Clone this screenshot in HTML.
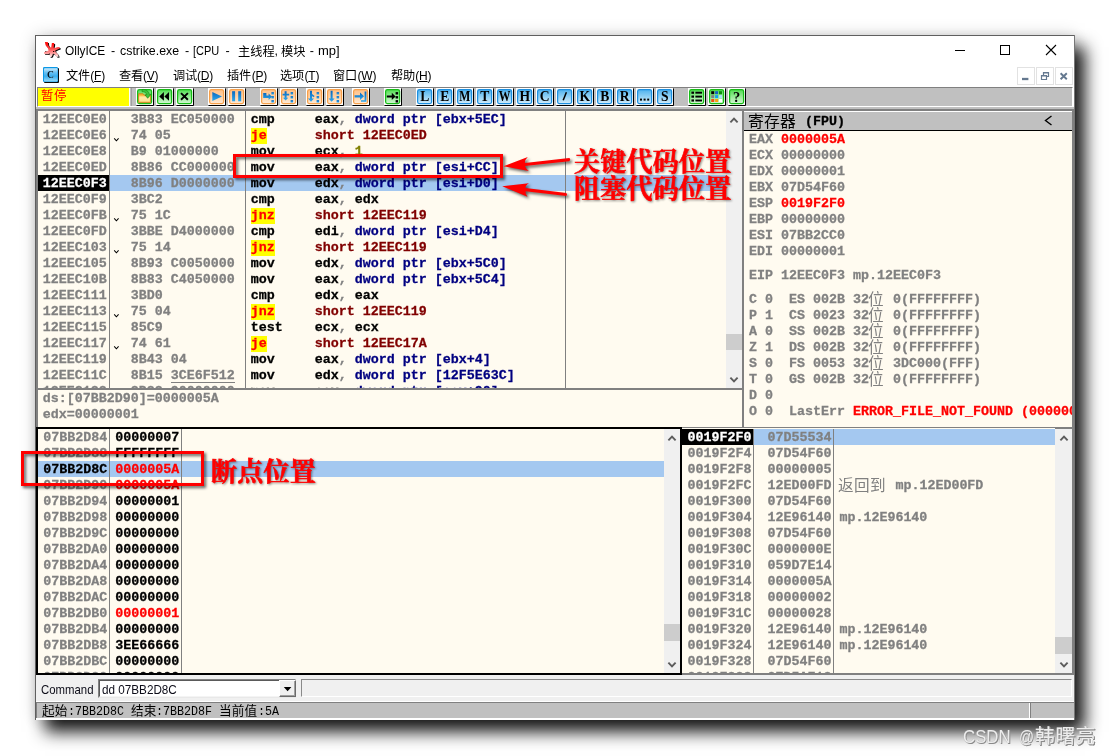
<!DOCTYPE html>
<html><head><meta charset="utf-8"><title>OllyICE</title>
<style>
html,body{margin:0;padding:0;background:#fff;}
body{width:1110px;height:756px;position:relative;overflow:hidden;font-family:"Liberation Sans",sans-serif;}
.a{position:absolute;}
#win{position:absolute;left:35px;top:35px;width:1040px;height:685px;background:#fff;
 box-shadow:10px 12px 16px rgba(0,0,0,.9),0 0 16px rgba(0,0,0,.16);}
.t{-webkit-text-stroke:.28px;white-space:pre;font-family:"Liberation Mono",monospace;font-weight:bold;font-size:13.333px;line-height:16px;height:16px;color:#000;}
.t span{display:inline-block;height:16px;vertical-align:top;}
.g{color:#808080}.r{color:#ff0000}.n{color:#000080}.m{color:#800000}.o{color:#808000}.w{color:#fff}
.j{color:#ff0000;background:#ffff00}
.ui{white-space:pre;font-family:"Liberation Sans",sans-serif;font-size:12px;line-height:16px;color:#000;}
.clip{overflow:hidden;}
.st{font-family:"Liberation Mono",monospace;font-size:13px;line-height:16px;white-space:pre;color:#000;transform-origin:0 0;transform:scaleX(.8974);}
#root{position:absolute;left:0;top:0;width:1110px;height:756px;will-change:transform;}
.cs{font-family:"Liberation Sans","Noto Sans CJK SC",sans-serif;}
.cm{font-family:"Liberation Mono","Noto Sans CJK SC",monospace;}
.cf{font-family:"Liberation Serif","Noto Serif CJK SC",serif;font-weight:bold;}
</style></head>
<body>
<svg width="0" height="0" style="position:absolute"><defs><linearGradient id="gG" x1="0" y1="0" x2="0" y2="1"><stop offset="0" stop-color="#52dc52"/><stop offset=".45" stop-color="#8eea8e"/><stop offset="1" stop-color="#d2f7d2"/></linearGradient>
<linearGradient id="gO" x1="0" y1="0" x2="0" y2="1"><stop offset="0" stop-color="#ffc088"/><stop offset=".5" stop-color="#ffd2a6"/><stop offset="1" stop-color="#ffead6"/></linearGradient>
<linearGradient id="gB" x1="0" y1="0" x2="0" y2="1"><stop offset="0" stop-color="#4fb2ee"/><stop offset=".5" stop-color="#8fd0f4"/><stop offset="1" stop-color="#d2ecfb"/></linearGradient>
<linearGradient id="gI" x1="0" y1="0" x2="0" y2="1"><stop offset="0" stop-color="#0868c0"/><stop offset="1" stop-color="#2ea8ec"/></linearGradient>
<linearGradient id="gS" x1="0" y1="0" x2="0" y2="1"><stop offset="0" stop-color="#ff0000"/><stop offset=".2" stop-color="#ff1818"/><stop offset=".5" stop-color="#ff5c5c"/><stop offset=".75" stop-color="#ffa0a0"/><stop offset="1" stop-color="#fff4f4"/></linearGradient>
<linearGradient id="gC" x1="0" y1="0" x2="0" y2="1"><stop offset="0" stop-color="#d0ecfb"/><stop offset=".3" stop-color="#6cc2f2"/><stop offset=".6" stop-color="#3aaeee"/><stop offset="1" stop-color="#9cdcf9"/></linearGradient>
<linearGradient id="gF" x1="0" y1="0" x2="0" y2="1"><stop offset="0" stop-color="#f0a020"/><stop offset=".5" stop-color="#ffe080"/><stop offset="1" stop-color="#f0b030"/></linearGradient>
<g id="splat">
 <path d="M.9 0L4 .2L4.3 3L5.5 5.2L7.2 5.6L7.9 1.1L10.2 1.1L10.2 3L9.6 5.4L11 6L13 5.2L15.6 5.1L15.8 6.6L13.5 7.4L11.2 8.6L11.6 10L14 12.4L14.8 14.6L12.8 15L11 12.8L9 11.6L8.4 13.6L7.2 15.2L5.6 14.8L5.8 12.4L5.4 11L4.6 12.2L.2 12L0 10.2L2.4 9.4L4.6 8.4L3.8 6L1.6 3.2Z" fill="#000" transform="translate(.9,.8)"/>
 <path d="M.9 0L4 .2L4.3 3L5.5 5.2L7.2 5.6L7.9 1.1L10.2 1.1L10.2 3L9.6 5.4L11 6L13 5.2L15.6 5.1L15.8 6.6L13.5 7.4L11.2 8.6L11.6 10L14 12.4L14.8 14.6L12.8 15L11 12.8L9 11.6L8.4 13.6L7.2 15.2L5.6 14.8L5.8 12.4L5.4 11L4.6 12.2L.2 12L0 10.2L2.4 9.4L4.6 8.4L3.8 6L1.6 3.2Z" fill="url(#gS)"/>
 <rect x="9" y="9" width="1.3" height="1" fill="#200"/><rect x="1.2" y="9.2" width="1.2" height=".8" fill="#300"/>
</g>
<g id="cicon">
 <rect x="1" y="1" width="15" height="15" rx="1" fill="#0a0a0a"/>
 <rect x="0" y="0" width="15" height="15" rx="1.2" fill="#0c98e6"/>
 <rect x="1" y="1.2" width="13.6" height="13.4" rx=".8" fill="url(#gC)"/>
 <text x="7.5" y="10.8" font-family="Liberation Serif" font-weight="bold" font-size="9.6" text-anchor="middle" fill="#04121e" stroke="#9adcfa" stroke-width=".25" paint-order="stroke">C</text>
</g>
</defs></svg>
<div id="root"><div id="win"></div>
<div class="a" style="left:35px;top:35px;width:1040px;height:1px;background:#5f5f5f;"></div>
<div class="a" style="left:35px;top:35px;width:1px;height:685px;background:#5f5f5f;"></div>
<div class="a" style="left:1074px;top:35px;width:1px;height:685px;background:#777;"></div>
<div class="a ui" style="left:64.6px;top:42.4px;font-size:12.5px;line-height:18px;transform-origin:0 0;transform:scaleX(0.95)">OllyICE</div>
<div class="a ui" style="left:111px;top:42.4px;font-size:12.5px;line-height:18px;transform-origin:0 0;transform:scaleX(1)">-</div>
<div class="a ui" style="left:119.6px;top:42.4px;font-size:12.5px;line-height:18px;transform-origin:0 0;transform:scaleX(0.99)">cstrike.exe</div>
<div class="a ui" style="left:185px;top:42.4px;font-size:12.5px;line-height:18px;transform-origin:0 0;transform:scaleX(1)">-</div>
<div class="a ui" style="left:193.4px;top:42.4px;font-size:12.5px;line-height:18px;transform-origin:0 0;transform:scaleX(0.88)">[CPU</div>
<div class="a ui" style="left:225.6px;top:42.4px;font-size:12.5px;line-height:18px;transform-origin:0 0;transform:scaleX(1)">-</div>
<svg class="a" style="left:238px;top:44.6px;" width="40.6" height="16.2" fill="#000" overflow="visible"><text class="cs" x="0 12.2 24.4" y="10.74" font-size="12.2">主线程</text></svg>
<div class="a ui" style="left:274.5px;top:42.4px;font-size:12.5px;line-height:18px;transform-origin:0 0;transform:scaleX(1)">,</div>
<svg class="a" style="left:281px;top:44.6px;" width="28.4" height="16.2" fill="#000" overflow="visible"><text class="cs" x="0 12.2" y="10.74" font-size="12.2">模块</text></svg>
<div class="a ui" style="left:309.8px;top:42.4px;font-size:12.5px;line-height:18px;transform-origin:0 0;transform:scaleX(1)">-</div>
<div class="a ui" style="left:317.6px;top:42.4px;font-size:12.5px;line-height:18px;transform-origin:0 0;transform:scaleX(1.04)">mp]</div>
<svg class="a" style="left:950px;top:40px" width="115" height="20" fill="none" stroke="#000" stroke-width="1"><path d="M5 10.5H15"/><rect x="50.5" y="5.5" width="9" height="9"/><path d="M96 5L106 15M106 5L96 15" stroke-width="1.1"/></svg>
<svg class="a" style="left:44px;top:42px" width="17" height="17" viewBox="0 0 17 17"><use href="#splat"/></svg>
<svg class="a" style="left:43px;top:67px" width="16" height="16" viewBox="0 0 16 16"><use href="#cicon"/></svg>
<svg class="a" style="left:66px;top:69.2px;" width="28" height="16.2" fill="#000" overflow="visible"><text class="cs" x="0 12" y="10.74" font-size="12.2">文件</text></svg>
<div class="a ui" style="left:90.3px;top:67px;font-size:12px;line-height:18px;letter-spacing:-.2px">(<u>F</u>)</div>
<svg class="a" style="left:118.6px;top:69.2px;" width="28" height="16.2" fill="#000" overflow="visible"><text class="cs" x="0 12" y="10.74" font-size="12.2">查看</text></svg>
<div class="a ui" style="left:142.9px;top:67px;font-size:12px;line-height:18px;letter-spacing:-.2px">(<u>V</u>)</div>
<svg class="a" style="left:172.6px;top:69.2px;" width="28" height="16.2" fill="#000" overflow="visible"><text class="cs" x="0 12" y="10.74" font-size="12.2">调试</text></svg>
<div class="a ui" style="left:196.9px;top:67px;font-size:12px;line-height:18px;letter-spacing:-.2px">(<u>D</u>)</div>
<svg class="a" style="left:227.4px;top:69.2px;" width="28" height="16.2" fill="#000" overflow="visible"><text class="cs" x="0 12" y="10.74" font-size="12.2">插件</text></svg>
<div class="a ui" style="left:251.7px;top:67px;font-size:12px;line-height:18px;letter-spacing:-.2px">(<u>P</u>)</div>
<svg class="a" style="left:280.2px;top:69.2px;" width="28" height="16.2" fill="#000" overflow="visible"><text class="cs" x="0 12" y="10.74" font-size="12.2">选项</text></svg>
<div class="a ui" style="left:304.5px;top:67px;font-size:12px;line-height:18px;letter-spacing:-.2px">(<u>T</u>)</div>
<svg class="a" style="left:333.2px;top:69.2px;" width="28" height="16.2" fill="#000" overflow="visible"><text class="cs" x="0 12" y="10.74" font-size="12.2">窗口</text></svg>
<div class="a ui" style="left:357.5px;top:67px;font-size:12px;line-height:18px;letter-spacing:-.2px">(<u>W</u>)</div>
<svg class="a" style="left:391px;top:69.2px;" width="28" height="16.2" fill="#000" overflow="visible"><text class="cs" x="0 12" y="10.74" font-size="12.2">帮助</text></svg>
<div class="a ui" style="left:415.3px;top:67px;font-size:12px;line-height:18px;letter-spacing:-.2px">(<u>H</u>)</div>
<div class="a" style="left:1017.3px;top:67px;width:17.4px;height:18px;background:#fff;border:1px solid #e2e2e2;box-sizing:border-box;"></div>
<div class="a" style="left:1036.3px;top:67px;width:17.4px;height:18px;background:#fff;border:1px solid #e2e2e2;box-sizing:border-box;"></div>
<div class="a" style="left:1055.3px;top:67px;width:17.4px;height:18px;background:#fff;border:1px solid #e2e2e2;box-sizing:border-box;"></div>
<svg class="a" style="left:1017px;top:67px" width="56" height="18" fill="none" stroke="#64788f"><path d="M5 12H11.4" stroke-width="2.3"/><path d="M24.5 8.5h5v4h-5zM26.5 8V5.5h5v4H30" stroke-width="1.2"/><path d="M24 8.8h6M26 5.8h6" stroke-width="1.6"/><path d="M43.6 6.2L49.8 12.2M49.8 6.2L43.6 12.2" stroke-width="1.9"/></svg>
<div class="a" style="left:37px;top:87px;width:1036px;height:20px;background:#c0c0c0;box-sizing:border-box;border-top:1px solid #808080;border-left:1px solid #808080;border-right:1px solid #fff;border-bottom:1px solid #fff;"></div>
<div class="a" style="left:38px;top:88px;width:91px;height:18px;background:#ffff00;"></div>
<div class="a" style="left:129px;top:88px;width:1px;height:18px;background:#fff;"></div>
<div class="a" style="left:130px;top:88px;width:1px;height:18px;background:#c0c0c0;"></div>
<div class="a" style="left:131px;top:88px;width:1px;height:18px;background:#a0a0a0;"></div>
<svg class="a" style="left:41.4px;top:89.4px;" width="30.2" height="16.4" fill="#ff0000" overflow="visible"><text class="cm" x="0 13.1" y="10.91" font-size="12.4">暂停</text></svg>
<div class="a" style="left:36px;top:107px;width:1038px;height:2px;background:#c0c0c0;"></div>
<div class="a" style="left:36px;top:109px;width:1038px;height:2px;background:#808080;"></div>
<div class="a" style="left:36px;top:675px;width:1038px;height:26px;background:#f0f0f0;"></div>
<div class="a ui" id="cmdl" style="left:41px;top:681px;font-size:13px;line-height:18px;transform-origin:0 0;transform:scaleX(.875);color:#0c0c18">Command</div>
<div class="a" style="left:98px;top:679px;width:198px;height:19px;background:#fff;box-sizing:border-box;border:1px solid;border-color:#828282 #e8e8e8 #e8e8e8 #828282;"></div>
<div class="a" style="left:99px;top:680px;width:196px;height:17px;background:transparent;box-sizing:border-box;border:1px solid;border-color:#5a5a5a #f4f4f4 #f4f4f4 #5a5a5a;"></div>
<div class="a ui" id="cmdt" style="left:102px;top:681px;font-size:13px;line-height:18px;transform-origin:0 0;transform:scaleX(.9);color:#0c0c18">dd 07BB2D8C</div>
<div class="a" style="left:279px;top:680px;width:16.5px;height:17px;background:#f0f0f0;box-sizing:border-box;border:1px solid;border-color:#fff #6a6a6a #6a6a6a #fff;box-shadow:inset -1px -1px 0 #a0a0a0;"></div>
<svg class="a" style="left:283px;top:686px" width="10" height="7"><path d="M.8 1h7.6L4.6 5.2z" fill="#000"/></svg>
<div class="a" style="left:301px;top:679px;width:771px;height:18px;background:#f0f0f0;box-sizing:border-box;border:1px solid;border-color:#8a8a8a #fff #fff #8a8a8a;"></div>
<div class="a" style="left:36px;top:701px;width:1038px;height:1px;background:#fff;"></div>
<div class="a" style="left:36px;top:702px;width:1038px;height:16px;background:#c0c0c0;box-sizing:border-box;border-top:1px solid #808080;border-left:1px solid #808080;"></div>
<div class="a" style="left:36px;top:718px;width:1038px;height:2px;background:#fff;"></div>
<div class="a" style="left:1029px;top:703px;width:1px;height:15px;background:#fff;"></div>
<div class="a" style="left:1030px;top:702px;width:1px;height:16px;background:#808080;"></div>
<svg class="a" style="left:42px;top:704.2px;" width="29.6" height="16.6" fill="#000" overflow="visible"><text class="cm" x="0 12.8" y="11.09" font-size="12.6">起始</text></svg>
<div class="a st" style="left:67.6px;top:704px;">:7BB2D8C </div>
<svg class="a" style="left:130.6px;top:704.2px;" width="29.6" height="16.6" fill="#000" overflow="visible"><text class="cm" x="0 12.8" y="11.09" font-size="12.6">结束</text></svg>
<div class="a st" style="left:156.2px;top:704px;">:7BB2D8F </div>
<svg class="a" style="left:219.2px;top:704.2px;" width="42.4" height="16.6" fill="#000" overflow="visible"><text class="cm" x="0 12.8 25.6" y="11.09" font-size="12.6">当前值</text></svg>
<div class="a st" style="left:257.6px;top:704px;">:5A</div>
<svg class="a" style="left:136px;top:88px" width="18" height="18" viewBox="0 0 18 18"><rect x="0" y="0" width="17" height="17" fill="#fff"/><path d="M17.5 0.5V17.5H0.5" fill="none" stroke="#000"/><rect x="1.6" y="1.6" width="14" height="14" rx="1.8" fill="url(#gG)" stroke="#16bc16" stroke-width="1.25"/><path d="M2.5 14.5V5.7h4.5l1 1.4h6.5v7.4z" fill="url(#gF)" stroke="#c88418" stroke-width=".8"/><rect x="3.4" y="8.4" width="10.4" height="5.2" fill="#ffeeb4" opacity=".75"/><path d="M6.2 1.5C9.6 1.1 12.7 3 13.4 6.4L15.1 6.2L11.7 10.3L9 6.9L10.8 6.7C10.2 4.6 8.6 3.6 6 3.6Z" fill="#3cc43c" stroke="#0c7c0c" stroke-width=".55"/></svg>
<svg class="a" style="left:156px;top:88px" width="18" height="18" viewBox="0 0 18 18"><rect x="0" y="0" width="17" height="17" fill="#fff"/><path d="M17.5 0.5V17.5H0.5" fill="none" stroke="#000"/><rect x="1.6" y="1.6" width="14" height="14" rx="1.8" fill="url(#gG)" stroke="#16bc16" stroke-width="1.25"/><path d="M3.2 8.4L7.9 4.1V12.8ZM8.4 8.4L13 4.1V12.8Z" fill="#000"/></svg>
<svg class="a" style="left:176px;top:88px" width="18" height="18" viewBox="0 0 18 18"><rect x="0" y="0" width="17" height="17" fill="#fff"/><path d="M17.5 0.5V17.5H0.5" fill="none" stroke="#000"/><rect x="1.6" y="1.6" width="14" height="14" rx="1.8" fill="url(#gG)" stroke="#16bc16" stroke-width="1.25"/><path d="M5 5.1L11.9 11.8M11.9 5.1L5 11.8" stroke="#000" stroke-width="1.9" fill="none"/></svg>
<svg class="a" style="left:208px;top:88px" width="18" height="18" viewBox="0 0 18 18"><rect x="0" y="0" width="17" height="17" fill="#fff"/><path d="M17.5 0.5V17.5H0.5" fill="none" stroke="#000"/><rect x="1.6" y="1.6" width="14" height="14" rx="1.8" fill="url(#gO)" stroke="#f7a04a" stroke-width="1.25"/><path d="M4.3 3.9L14 8.4L4.3 12.9Z" fill="url(#gI)"/></svg>
<svg class="a" style="left:228px;top:88px" width="18" height="18" viewBox="0 0 18 18"><rect x="0" y="0" width="17" height="17" fill="#fff"/><path d="M17.5 0.5V17.5H0.5" fill="none" stroke="#000"/><rect x="1.6" y="1.6" width="14" height="14" rx="1.8" fill="url(#gO)" stroke="#f7a04a" stroke-width="1.25"/><rect x="4.1" y="3.2" width="3" height="10.1" fill="url(#gI)"/><rect x="10.2" y="3.2" width="3" height="10.1" fill="url(#gI)"/></svg>
<svg class="a" style="left:260px;top:88px" width="18" height="18" viewBox="0 0 18 18"><rect x="0" y="0" width="17" height="17" fill="#fff"/><path d="M17.5 0.5V17.5H0.5" fill="none" stroke="#000"/><rect x="1.6" y="1.6" width="14" height="14" rx="1.8" fill="url(#gO)" stroke="#f7a04a" stroke-width="1.25"/><path d="M3.2 5h3.2v2.6h2.2V5.6L12 8.8 8.6 12v-2H3.2z" fill="url(#gI)"/><rect x="11.4" y="4.1" width="2.5" height="2.4" fill="url(#gI)"/><rect x="11.4" y="8.1" width="2.5" height="2.4" fill="url(#gI)"/><rect x="11.4" y="12.1" width="2.5" height="2.4" fill="url(#gI)"/></svg>
<svg class="a" style="left:280px;top:88px" width="18" height="18" viewBox="0 0 18 18"><rect x="0" y="0" width="17" height="17" fill="#fff"/><path d="M17.5 0.5V17.5H0.5" fill="none" stroke="#000"/><rect x="1.6" y="1.6" width="14" height="14" rx="1.8" fill="url(#gO)" stroke="#f7a04a" stroke-width="1.25"/><path d="M4.6 3.2h2v2.6h2.6v1.8H6.6v2.2h1.6L5.6 12.4 3 9.8h1.6V7.6H2.6V5.8h2z" fill="url(#gI)"/><rect x="10.6" y="4.1" width="2.5" height="2.4" fill="url(#gI)"/><rect x="10.6" y="8.1" width="2.5" height="2.4" fill="url(#gI)"/><rect x="10.6" y="12.1" width="2.5" height="2.4" fill="url(#gI)"/></svg>
<svg class="a" style="left:306px;top:88px" width="18" height="18" viewBox="0 0 18 18"><rect x="0" y="0" width="17" height="17" fill="#fff"/><path d="M17.5 0.5V17.5H0.5" fill="none" stroke="#000"/><rect x="1.6" y="1.6" width="14" height="14" rx="1.8" fill="url(#gO)" stroke="#f7a04a" stroke-width="1.25"/><path d="M4 2.8h2v3.2l2.6 2-1 1.2-1.6-1.2v2.4h2L5 13.8 2 10.4h2z" fill="url(#gI)"/><rect x="10.6" y="4.1" width="2.5" height="2.4" fill="url(#gI)"/><rect x="10.6" y="8.1" width="2.5" height="2.4" fill="url(#gI)"/><rect x="10.6" y="12.1" width="2.5" height="2.4" fill="url(#gI)"/></svg>
<svg class="a" style="left:326px;top:88px" width="18" height="18" viewBox="0 0 18 18"><rect x="0" y="0" width="17" height="17" fill="#fff"/><path d="M17.5 0.5V17.5H0.5" fill="none" stroke="#000"/><rect x="1.6" y="1.6" width="14" height="14" rx="1.8" fill="url(#gO)" stroke="#f7a04a" stroke-width="1.25"/><path d="M4.6 2.8h2v7.6h2L5.6 13.8 2.6 10.4h2z" fill="url(#gI)"/><rect x="10.6" y="4.1" width="2.5" height="2.4" fill="url(#gI)"/><rect x="10.6" y="8.1" width="2.5" height="2.4" fill="url(#gI)"/><rect x="10.6" y="12.1" width="2.5" height="2.4" fill="url(#gI)"/></svg>
<svg class="a" style="left:352px;top:88px" width="18" height="18" viewBox="0 0 18 18"><rect x="0" y="0" width="17" height="17" fill="#fff"/><path d="M17.5 0.5V17.5H0.5" fill="none" stroke="#000"/><rect x="1.6" y="1.6" width="14" height="14" rx="1.8" fill="url(#gO)" stroke="#f7a04a" stroke-width="1.25"/><path d="M2.6 7.2h5.4V4.6L12 8.3 8 12V9.4H2.6z" fill="url(#gI)"/><path d="M12.6 3.4h1.8v10.4H9v-1.6h3.6z" fill="url(#gI)"/></svg>
<svg class="a" style="left:384px;top:88px" width="18" height="18" viewBox="0 0 18 18"><rect x="0" y="0" width="17" height="17" fill="#fff"/><path d="M17.5 0.5V17.5H0.5" fill="none" stroke="#000"/><rect x="1.6" y="1.6" width="14" height="14" rx="1.8" fill="url(#gG)" stroke="#16bc16" stroke-width="1.25"/><path d="M2.8 7.4h5V4.8L11.6 8.4 7.8 12V9.4h-5z" fill="#000"/><rect x="11.6" y="4.1" width="2.5" height="2.4" fill="#000"/><rect x="11.6" y="8.1" width="2.5" height="2.4" fill="#000"/><rect x="11.6" y="12.1" width="2.5" height="2.4" fill="#000"/></svg>
<svg class="a" style="left:416px;top:88px" width="18" height="18" viewBox="0 0 18 18"><rect x="0" y="0" width="17" height="17" fill="#fff"/><path d="M17.5 0.5V17.5H0.5" fill="none" stroke="#000"/><rect x="1.6" y="1.6" width="14" height="14" rx="1.8" fill="url(#gB)" stroke="#1c8fe0" stroke-width="1.25"/><text x="8.7" y="13.4" font-family="Liberation Serif" font-weight="bold" font-size="13.6" text-anchor="middle" fill="#000">L</text></svg>
<svg class="a" style="left:436px;top:88px" width="18" height="18" viewBox="0 0 18 18"><rect x="0" y="0" width="17" height="17" fill="#fff"/><path d="M17.5 0.5V17.5H0.5" fill="none" stroke="#000"/><rect x="1.6" y="1.6" width="14" height="14" rx="1.8" fill="url(#gB)" stroke="#1c8fe0" stroke-width="1.25"/><text x="8.7" y="13.4" font-family="Liberation Serif" font-weight="bold" font-size="13.6" text-anchor="middle" fill="#000">E</text></svg>
<svg class="a" style="left:456px;top:88px" width="18" height="18" viewBox="0 0 18 18"><rect x="0" y="0" width="17" height="17" fill="#fff"/><path d="M17.5 0.5V17.5H0.5" fill="none" stroke="#000"/><rect x="1.6" y="1.6" width="14" height="14" rx="1.8" fill="url(#gB)" stroke="#1c8fe0" stroke-width="1.25"/><text x="8.7" y="13.4" transform="translate(8.7,0) scale(0.86,1) translate(-8.7,0)" font-family="Liberation Serif" font-weight="bold" font-size="13.6" text-anchor="middle" fill="#000">M</text></svg>
<svg class="a" style="left:476px;top:88px" width="18" height="18" viewBox="0 0 18 18"><rect x="0" y="0" width="17" height="17" fill="#fff"/><path d="M17.5 0.5V17.5H0.5" fill="none" stroke="#000"/><rect x="1.6" y="1.6" width="14" height="14" rx="1.8" fill="url(#gB)" stroke="#1c8fe0" stroke-width="1.25"/><text x="8.7" y="13.4" font-family="Liberation Serif" font-weight="bold" font-size="13.6" text-anchor="middle" fill="#000">T</text></svg>
<svg class="a" style="left:496px;top:88px" width="18" height="18" viewBox="0 0 18 18"><rect x="0" y="0" width="17" height="17" fill="#fff"/><path d="M17.5 0.5V17.5H0.5" fill="none" stroke="#000"/><rect x="1.6" y="1.6" width="14" height="14" rx="1.8" fill="url(#gB)" stroke="#1c8fe0" stroke-width="1.25"/><text x="8.7" y="13.4" transform="translate(8.7,0) scale(0.86,1) translate(-8.7,0)" font-family="Liberation Serif" font-weight="bold" font-size="13.6" text-anchor="middle" fill="#000">W</text></svg>
<svg class="a" style="left:516px;top:88px" width="18" height="18" viewBox="0 0 18 18"><rect x="0" y="0" width="17" height="17" fill="#fff"/><path d="M17.5 0.5V17.5H0.5" fill="none" stroke="#000"/><rect x="1.6" y="1.6" width="14" height="14" rx="1.8" fill="url(#gB)" stroke="#1c8fe0" stroke-width="1.25"/><text x="8.7" y="13.4" font-family="Liberation Serif" font-weight="bold" font-size="13.6" text-anchor="middle" fill="#000">H</text></svg>
<svg class="a" style="left:536px;top:88px" width="18" height="18" viewBox="0 0 18 18"><rect x="0" y="0" width="17" height="17" fill="#fff"/><path d="M17.5 0.5V17.5H0.5" fill="none" stroke="#000"/><rect x="1.6" y="1.6" width="14" height="14" rx="1.8" fill="url(#gB)" stroke="#1c8fe0" stroke-width="1.25"/><text x="8.7" y="13.4" font-family="Liberation Serif" font-weight="bold" font-size="13.6" text-anchor="middle" fill="#000">C</text></svg>
<svg class="a" style="left:556px;top:88px" width="18" height="18" viewBox="0 0 18 18"><rect x="0" y="0" width="17" height="17" fill="#fff"/><path d="M17.5 0.5V17.5H0.5" fill="none" stroke="#000"/><rect x="1.6" y="1.6" width="14" height="14" rx="1.8" fill="url(#gB)" stroke="#1c8fe0" stroke-width="1.25"/><path d="M7.2 12.2L10.4 4.2" stroke="#000" stroke-width="1.5"/></svg>
<svg class="a" style="left:576px;top:88px" width="18" height="18" viewBox="0 0 18 18"><rect x="0" y="0" width="17" height="17" fill="#fff"/><path d="M17.5 0.5V17.5H0.5" fill="none" stroke="#000"/><rect x="1.6" y="1.6" width="14" height="14" rx="1.8" fill="url(#gB)" stroke="#1c8fe0" stroke-width="1.25"/><text x="8.7" y="13.4" font-family="Liberation Serif" font-weight="bold" font-size="13.6" text-anchor="middle" fill="#000">K</text></svg>
<svg class="a" style="left:596px;top:88px" width="18" height="18" viewBox="0 0 18 18"><rect x="0" y="0" width="17" height="17" fill="#fff"/><path d="M17.5 0.5V17.5H0.5" fill="none" stroke="#000"/><rect x="1.6" y="1.6" width="14" height="14" rx="1.8" fill="url(#gB)" stroke="#1c8fe0" stroke-width="1.25"/><text x="8.7" y="13.4" font-family="Liberation Serif" font-weight="bold" font-size="13.6" text-anchor="middle" fill="#000">B</text></svg>
<svg class="a" style="left:616px;top:88px" width="18" height="18" viewBox="0 0 18 18"><rect x="0" y="0" width="17" height="17" fill="#fff"/><path d="M17.5 0.5V17.5H0.5" fill="none" stroke="#000"/><rect x="1.6" y="1.6" width="14" height="14" rx="1.8" fill="url(#gB)" stroke="#1c8fe0" stroke-width="1.25"/><text x="8.7" y="13.4" font-family="Liberation Serif" font-weight="bold" font-size="13.6" text-anchor="middle" fill="#000">R</text></svg>
<svg class="a" style="left:636px;top:88px" width="18" height="18" viewBox="0 0 18 18"><rect x="0" y="0" width="17" height="17" fill="#fff"/><path d="M17.5 0.5V17.5H0.5" fill="none" stroke="#000"/><rect x="1.6" y="1.6" width="14" height="14" rx="1.8" fill="url(#gB)" stroke="#1c8fe0" stroke-width="1.25"/><rect x="4" y="10.6" width="2" height="2" fill="#000"/><rect x="7.6" y="10.6" width="2" height="2" fill="#000"/><rect x="11.2" y="10.6" width="2" height="2" fill="#000"/></svg>
<svg class="a" style="left:656px;top:88px" width="18" height="18" viewBox="0 0 18 18"><rect x="0" y="0" width="17" height="17" fill="#fff"/><path d="M17.5 0.5V17.5H0.5" fill="none" stroke="#000"/><rect x="1.6" y="1.6" width="14" height="14" rx="1.8" fill="url(#gB)" stroke="#1c8fe0" stroke-width="1.25"/><text x="8.7" y="13.4" font-family="Liberation Serif" font-weight="bold" font-size="13.6" text-anchor="middle" fill="#000">S</text></svg>
<svg class="a" style="left:688px;top:88px" width="18" height="18" viewBox="0 0 18 18"><rect x="0" y="0" width="17" height="17" fill="#fff"/><path d="M17.5 0.5V17.5H0.5" fill="none" stroke="#000"/><rect x="1.6" y="1.6" width="14" height="14" rx="1.8" fill="url(#gG)" stroke="#16bc16" stroke-width="1.25"/><rect x="3.4" y="3.6" width="2.6" height="2.2" fill="#000"/><rect x="7.4" y="3.75" width="6.6" height="1.9" fill="#000"/><rect x="3.4" y="7.5" width="2.6" height="2.2" fill="#000"/><rect x="7.4" y="7.65" width="6.6" height="1.9" fill="#000"/><rect x="3.4" y="11.4" width="2.6" height="2.2" fill="#000"/><rect x="7.4" y="11.55" width="6.6" height="1.9" fill="#000"/></svg>
<svg class="a" style="left:708px;top:88px" width="18" height="18" viewBox="0 0 18 18"><rect x="0" y="0" width="17" height="17" fill="#fff"/><path d="M17.5 0.5V17.5H0.5" fill="none" stroke="#000"/><rect x="1.6" y="1.6" width="14" height="14" rx="1.8" fill="url(#gG)" stroke="#16bc16" stroke-width="1.25"/><rect x="3.2" y="3.2" width="3" height="3" fill="#000"/><rect x="7.1" y="3.2" width="3" height="3" fill="#1560c0"/><rect x="11" y="3.2" width="3" height="3" fill="#0e8e0e"/><rect x="3.2" y="7.1" width="3" height="3" fill="#808080"/><rect x="7.1" y="7.1" width="3" height="3" fill="#10a0f0"/><rect x="11" y="7.1" width="3" height="3" fill="#a8e2f8"/><rect x="3.2" y="11" width="3" height="3" fill="#f05010"/><rect x="7.1" y="11" width="3" height="3" fill="#f8a010"/><rect x="11" y="11" width="3" height="3" fill="#fff"/></svg>
<svg class="a" style="left:728px;top:88px" width="18" height="18" viewBox="0 0 18 18"><rect x="0" y="0" width="17" height="17" fill="#fff"/><path d="M17.5 0.5V17.5H0.5" fill="none" stroke="#000"/><rect x="1.6" y="1.6" width="14" height="14" rx="1.8" fill="url(#gG)" stroke="#16bc16" stroke-width="1.25"/><text x="8.7" y="13.6" font-family="Liberation Serif" font-weight="bold" font-size="14.5" text-anchor="middle" fill="#000">?</text></svg>
<div class="a" style="left:36px;top:109px;width:2px;height:280px;background:#808080;"></div>
<div class="a" style="left:38px;top:111px;width:688px;height:277px;background:#fffbf0;"></div>
<div class="a clip" style="left:38px;top:111px;width:688px;height:277px">
<div class="a t g" style="left:4.7px;top:0.6px;">12EEC0E0</div>
<div class="a t g" style="left:92.7px;top:0.6px;">3B83 EC050000</div>
<div class="a t " style="left:212.7px;top:0.6px;">cmp     eax<span class="g">,</span><span class="n"> dword ptr [ebx+5EC]</span></div>
<div class="a t g" style="left:4.7px;top:16.6px;">12EEC0E6</div>
<svg class="a" style="left:75px;top:26px" width="8" height="6" fill="none" stroke="#000" stroke-width="1.05"><path d="M1.2 1.4L3.4 3.8L5.6 1.4"/></svg>
<div class="a t g" style="left:92.7px;top:16.6px;">74 05</div>
<div class="a t " style="left:212.7px;top:16.6px;"><span class="j">je</span>      <span class="m">short 12EEC0ED</span></div>
<div class="a t g" style="left:4.7px;top:32.6px;">12EEC0E8</div>
<div class="a t g" style="left:92.7px;top:32.6px;">B9 01000000</div>
<div class="a t " style="left:212.7px;top:32.6px;">mov     ecx<span class="g">,</span><span class="o"> 1</span></div>
<div class="a t g" style="left:4.7px;top:48.6px;">12EEC0ED</div>
<div class="a t g" style="left:92.7px;top:48.6px;">8B86 CC000000</div>
<div class="a t " style="left:212.7px;top:48.6px;">mov     eax<span class="g">,</span><span class="n"> dword ptr [esi+CC]</span></div>
<div class="a" style="left:0px;top:64px;width:71px;height:16px;background:#000;"></div>
<div class="a" style="left:72px;top:64px;width:616px;height:16px;background:#a4c8f0;"></div>
<div class="a t w" style="left:4.7px;top:64.6px;">12EEC0F3</div>
<div class="a t g" style="left:92.7px;top:64.6px;">8B96 D0000000</div>
<div class="a t " style="left:212.7px;top:64.6px;">mov     edx<span class="g">,</span><span class="n"> dword ptr [esi+D0]</span></div>
<div class="a t g" style="left:4.7px;top:80.6px;">12EEC0F9</div>
<div class="a t g" style="left:92.7px;top:80.6px;">3BC2</div>
<div class="a t " style="left:212.7px;top:80.6px;">cmp     eax<span class="g">,</span> edx</div>
<div class="a t g" style="left:4.7px;top:96.6px;">12EEC0FB</div>
<svg class="a" style="left:75px;top:106px" width="8" height="6" fill="none" stroke="#000" stroke-width="1.05"><path d="M1.2 1.4L3.4 3.8L5.6 1.4"/></svg>
<div class="a t g" style="left:92.7px;top:96.6px;">75 1C</div>
<div class="a t " style="left:212.7px;top:96.6px;"><span class="j">jnz</span>     <span class="m">short 12EEC119</span></div>
<div class="a t g" style="left:4.7px;top:112.6px;">12EEC0FD</div>
<div class="a t g" style="left:92.7px;top:112.6px;">3BBE D4000000</div>
<div class="a t " style="left:212.7px;top:112.6px;">cmp     edi<span class="g">,</span><span class="n"> dword ptr [esi+D4]</span></div>
<div class="a t g" style="left:4.7px;top:128.6px;">12EEC103</div>
<svg class="a" style="left:75px;top:138px" width="8" height="6" fill="none" stroke="#000" stroke-width="1.05"><path d="M1.2 1.4L3.4 3.8L5.6 1.4"/></svg>
<div class="a t g" style="left:92.7px;top:128.6px;">75 14</div>
<div class="a t " style="left:212.7px;top:128.6px;"><span class="j">jnz</span>     <span class="m">short 12EEC119</span></div>
<div class="a t g" style="left:4.7px;top:144.6px;">12EEC105</div>
<div class="a t g" style="left:92.7px;top:144.6px;">8B93 C0050000</div>
<div class="a t " style="left:212.7px;top:144.6px;">mov     edx<span class="g">,</span><span class="n"> dword ptr [ebx+5C0]</span></div>
<div class="a t g" style="left:4.7px;top:160.6px;">12EEC10B</div>
<div class="a t g" style="left:92.7px;top:160.6px;">8B83 C4050000</div>
<div class="a t " style="left:212.7px;top:160.6px;">mov     eax<span class="g">,</span><span class="n"> dword ptr [ebx+5C4]</span></div>
<div class="a t g" style="left:4.7px;top:176.6px;">12EEC111</div>
<div class="a t g" style="left:92.7px;top:176.6px;">3BD0</div>
<div class="a t " style="left:212.7px;top:176.6px;">cmp     edx<span class="g">,</span> eax</div>
<div class="a t g" style="left:4.7px;top:192.6px;">12EEC113</div>
<svg class="a" style="left:75px;top:202px" width="8" height="6" fill="none" stroke="#000" stroke-width="1.05"><path d="M1.2 1.4L3.4 3.8L5.6 1.4"/></svg>
<div class="a t g" style="left:92.7px;top:192.6px;">75 04</div>
<div class="a t " style="left:212.7px;top:192.6px;"><span class="j">jnz</span>     <span class="m">short 12EEC119</span></div>
<div class="a t g" style="left:4.7px;top:208.6px;">12EEC115</div>
<div class="a t g" style="left:92.7px;top:208.6px;">85C9</div>
<div class="a t " style="left:212.7px;top:208.6px;">test    ecx<span class="g">,</span> ecx</div>
<div class="a t g" style="left:4.7px;top:224.6px;">12EEC117</div>
<svg class="a" style="left:75px;top:234px" width="8" height="6" fill="none" stroke="#000" stroke-width="1.05"><path d="M1.2 1.4L3.4 3.8L5.6 1.4"/></svg>
<div class="a t g" style="left:92.7px;top:224.6px;">74 61</div>
<div class="a t " style="left:212.7px;top:224.6px;"><span class="j">je</span>      <span class="m">short 12EEC17A</span></div>
<div class="a t g" style="left:4.7px;top:240.6px;">12EEC119</div>
<div class="a t g" style="left:92.7px;top:240.6px;">8B43 04</div>
<div class="a t " style="left:212.7px;top:240.6px;">mov     eax<span class="g">,</span><span class="n"> dword ptr [ebx+4]</span></div>
<div class="a t g" style="left:4.7px;top:256.6px;">12EEC11C</div>
<div class="a t g" style="left:92.7px;top:256.6px;">8B15 3CE6F512</div>
<div class="a t " style="left:212.7px;top:256.6px;">mov     edx<span class="g">,</span><span class="n"> dword ptr [12F5E63C]</span></div>
<div class="a t g" style="left:4.7px;top:272.6px;">12EEC122</div>
<div class="a t g" style="left:92.7px;top:272.6px;">8B88 90000000</div>
<div class="a t " style="left:212.7px;top:272.6px;">mov     ecx<span class="g">,</span><span class="n"> dword ptr [eax+90]</span></div>
<div class="a" style="left:133px;top:271px;width:64px;height:1px;background:#808080;"></div>
</div>
<div class="a" style="left:109px;top:111px;width:1px;height:277px;background:#808080;"></div>
<div class="a" style="left:245px;top:111px;width:1px;height:277px;background:#808080;"></div>
<div class="a" style="left:565px;top:111px;width:1px;height:277px;background:#808080;"></div>
<div class="a" style="left:726px;top:111px;width:16px;height:277px;background:#f0f0f0;"></div>
<div class="a" style="left:726px;top:334px;width:16px;height:16px;background:#cdcdcd;"></div>
<svg class="a" style="left:728px;top:115.6px" width="12" height="8" fill="none" stroke="#5c5c5c" stroke-width="1.9"><path d="M2.4 6.4L6 2.6L9.6 6.4"/></svg>
<svg class="a" style="left:728px;top:376px" width="12" height="8" fill="none" stroke="#5c5c5c" stroke-width="1.9"><path d="M2.4 1.6L6 5.4L9.6 1.6"/></svg>
<div class="a" style="left:36px;top:388px;width:706px;height:2px;background:#808080;"></div>
<div class="a" style="left:36px;top:389px;width:2px;height:38px;background:#808080;"></div>
<div class="a" style="left:38px;top:390px;width:704px;height:37px;background:#fffbf0;"></div>
<div class="a t g" style="left:42.7px;top:390.6px;">ds:[07BB2D90]=0000005A</div>
<div class="a t g" style="left:42.7px;top:406.6px;">edx=00000001</div>
<div class="a" style="left:36px;top:427px;width:645px;height:2px;background:#000;"></div>
<div class="a" style="left:36px;top:427px;width:2px;height:248px;background:#000;"></div>
<div class="a" style="left:38px;top:429px;width:626px;height:244px;background:#fffbf0;"></div>
<div class="a clip" style="left:38px;top:429px;width:626px;height:244px">
<div class="a t g" style="left:5.2px;top:0.6px;">07BB2D84</div>
<div class="a t " style="left:77.2px;top:0.6px;">00000007</div>
<div class="a t g" style="left:5.2px;top:16.6px;">07BB2D88</div>
<div class="a t " style="left:77.2px;top:16.6px;">FFFFFFFF</div>
<div class="a" style="left:0px;top:32px;width:626px;height:16px;background:#a4c8f0;"></div>
<div class="a t " style="left:5.2px;top:32.6px;">07BB2D8C</div>
<div class="a t r" style="left:77.2px;top:32.6px;">0000005A</div>
<div class="a t g" style="left:5.2px;top:48.6px;">07BB2D90</div>
<div class="a t r" style="left:77.2px;top:48.6px;">0000005A</div>
<div class="a t g" style="left:5.2px;top:64.6px;">07BB2D94</div>
<div class="a t " style="left:77.2px;top:64.6px;">00000001</div>
<div class="a t g" style="left:5.2px;top:80.6px;">07BB2D98</div>
<div class="a t " style="left:77.2px;top:80.6px;">00000000</div>
<div class="a t g" style="left:5.2px;top:96.6px;">07BB2D9C</div>
<div class="a t " style="left:77.2px;top:96.6px;">00000000</div>
<div class="a t g" style="left:5.2px;top:112.6px;">07BB2DA0</div>
<div class="a t " style="left:77.2px;top:112.6px;">00000000</div>
<div class="a t g" style="left:5.2px;top:128.6px;">07BB2DA4</div>
<div class="a t " style="left:77.2px;top:128.6px;">00000000</div>
<div class="a t g" style="left:5.2px;top:144.6px;">07BB2DA8</div>
<div class="a t " style="left:77.2px;top:144.6px;">00000000</div>
<div class="a t g" style="left:5.2px;top:160.6px;">07BB2DAC</div>
<div class="a t " style="left:77.2px;top:160.6px;">00000000</div>
<div class="a t g" style="left:5.2px;top:176.6px;">07BB2DB0</div>
<div class="a t r" style="left:77.2px;top:176.6px;">00000001</div>
<div class="a t g" style="left:5.2px;top:192.6px;">07BB2DB4</div>
<div class="a t " style="left:77.2px;top:192.6px;">00000000</div>
<div class="a t g" style="left:5.2px;top:208.6px;">07BB2DB8</div>
<div class="a t " style="left:77.2px;top:208.6px;">3EE66666</div>
<div class="a t g" style="left:5.2px;top:224.6px;">07BB2DBC</div>
<div class="a t " style="left:77.2px;top:224.6px;">00000000</div>
<div class="a t g" style="left:5.2px;top:240.6px;">07BB2DC0</div>
<div class="a t " style="left:77.2px;top:240.6px;">00000000</div>
</div>
<div class="a" style="left:109px;top:429px;width:1px;height:244px;background:#808080;"></div>
<div class="a" style="left:181px;top:429px;width:1px;height:244px;background:#808080;"></div>
<div class="a" style="left:664px;top:429px;width:16px;height:244px;background:#f0f0f0;"></div>
<div class="a" style="left:664px;top:624px;width:16px;height:17px;background:#cdcdcd;"></div>
<svg class="a" style="left:666px;top:433.6px" width="12" height="8" fill="none" stroke="#5c5c5c" stroke-width="1.9"><path d="M2.4 6.4L6 2.6L9.6 6.4"/></svg>
<svg class="a" style="left:666px;top:661px" width="12" height="8" fill="none" stroke="#5c5c5c" stroke-width="1.9"><path d="M2.4 1.6L6 5.4L9.6 1.6"/></svg>
<div class="a" style="left:36px;top:673px;width:645px;height:2px;background:#000;"></div>
<div class="a" style="left:680px;top:427px;width:2px;height:248px;background:#000;"></div>
<div class="a" style="left:682px;top:427px;width:392px;height:2px;background:#808080;"></div>
<div class="a" style="left:682px;top:428px;width:373px;height:245px;background:#fffbf0;"></div>
<div class="a clip" style="left:682px;top:429px;width:373px;height:244px">
<div class="a" style="left:0px;top:0px;width:71px;height:16px;background:#000;"></div>
<div class="a" style="left:72px;top:0px;width:301px;height:16px;background:#a4c8f0;"></div>
<div class="a t w" style="left:5.4px;top:0.6px;">0019F2F0</div>
<div class="a t g" style="left:85.4px;top:0.6px;">07D55534</div>
<div class="a t g" style="left:5.4px;top:16.6px;">0019F2F4</div>
<div class="a t g" style="left:85.4px;top:16.6px;">07D54F60</div>
<div class="a t g" style="left:5.4px;top:32.6px;">0019F2F8</div>
<div class="a t g" style="left:85.4px;top:32.6px;">00000005</div>
<div class="a t g" style="left:5.4px;top:48.6px;">0019F2FC</div>
<div class="a t g" style="left:85.4px;top:48.6px;">12ED00FD</div>
<svg class="a" style="left:156px;top:48.4px;" width="52" height="19.6" fill="#808080" overflow="visible"><text class="cm" x="0 16 32" y="13.73" font-size="15.6">返回到</text></svg>
<div class="a t g" style="left:213.4px;top:48.6px;">mp.12ED00FD</div>
<div class="a t g" style="left:5.4px;top:64.6px;">0019F300</div>
<div class="a t g" style="left:85.4px;top:64.6px;">07D54F60</div>
<div class="a t g" style="left:5.4px;top:80.6px;">0019F304</div>
<div class="a t g" style="left:85.4px;top:80.6px;">12E96140</div>
<div class="a t g" style="left:157.4px;top:80.6px;">mp.12E96140</div>
<div class="a t g" style="left:5.4px;top:96.6px;">0019F308</div>
<div class="a t g" style="left:85.4px;top:96.6px;">07D54F60</div>
<div class="a t g" style="left:5.4px;top:112.6px;">0019F30C</div>
<div class="a t g" style="left:85.4px;top:112.6px;">0000000E</div>
<div class="a t g" style="left:5.4px;top:128.6px;">0019F310</div>
<div class="a t g" style="left:85.4px;top:128.6px;">059D7E14</div>
<div class="a t g" style="left:5.4px;top:144.6px;">0019F314</div>
<div class="a t g" style="left:85.4px;top:144.6px;">0000005A</div>
<div class="a t g" style="left:5.4px;top:160.6px;">0019F318</div>
<div class="a t g" style="left:85.4px;top:160.6px;">00000002</div>
<div class="a t g" style="left:5.4px;top:176.6px;">0019F31C</div>
<div class="a t g" style="left:85.4px;top:176.6px;">00000028</div>
<div class="a t g" style="left:5.4px;top:192.6px;">0019F320</div>
<div class="a t g" style="left:85.4px;top:192.6px;">12E96140</div>
<div class="a t g" style="left:157.4px;top:192.6px;">mp.12E96140</div>
<div class="a t g" style="left:5.4px;top:208.6px;">0019F324</div>
<div class="a t g" style="left:85.4px;top:208.6px;">12E96140</div>
<div class="a t g" style="left:157.4px;top:208.6px;">mp.12E96140</div>
<div class="a t g" style="left:5.4px;top:224.6px;">0019F328</div>
<div class="a t g" style="left:85.4px;top:224.6px;">07D54F60</div>
<div class="a t g" style="left:5.4px;top:240.6px;">0019F32C</div>
<div class="a t g" style="left:85.4px;top:240.6px;">07D5AF18</div>
</div>
<div class="a" style="left:753px;top:429px;width:1px;height:244px;background:#808080;"></div>
<div class="a" style="left:833px;top:429px;width:1px;height:244px;background:#808080;"></div>
<div class="a" style="left:1055px;top:429px;width:17px;height:244px;background:#f0f0f0;"></div>
<div class="a" style="left:1055px;top:637px;width:17px;height:17px;background:#cdcdcd;"></div>
<svg class="a" style="left:1057.5px;top:433.6px" width="12" height="8" fill="none" stroke="#5c5c5c" stroke-width="1.9"><path d="M2.4 6.4L6 2.6L9.6 6.4"/></svg>
<svg class="a" style="left:1057.5px;top:661px" width="12" height="8" fill="none" stroke="#5c5c5c" stroke-width="1.9"><path d="M2.4 1.6L6 5.4L9.6 1.6"/></svg>
<div class="a" style="left:682px;top:673px;width:392px;height:2px;background:#808080;"></div>
<div class="a" style="left:742px;top:109px;width:2px;height:318px;background:#808080;"></div>
<div class="a" style="left:1072px;top:109px;width:2px;height:566px;background:#808080;"></div>
<div class="a" style="left:744px;top:111px;width:328px;height:1px;background:#fff;"></div>
<div class="a" style="left:744px;top:112px;width:328px;height:18px;background:#c0c0c0;"></div>
<div class="a" style="left:744px;top:130px;width:328px;height:1px;background:#000;"></div>
<div class="a" style="left:744px;top:131px;width:328px;height:296px;background:#fffbf0;"></div>
<svg class="a" style="left:748px;top:113.4px;" width="52" height="19.8" fill="#000" overflow="visible"><text class="cm" x="0 16 32" y="13.9" font-size="15.8">寄存器</text></svg>
<div class="a t " style="left:797px;top:113.6px;"> (FPU)</div>
<svg class="a" style="left:1042px;top:114px" width="14" height="14" fill="none" stroke="#000" stroke-width="1.4"><path d="M9.5 2L3.5 6.5L9.5 11"/></svg>
<div class="a clip" style="left:744px;top:131px;width:328px;height:295px">
<div class="a t g" style="left:5px;top:0.6px;">EAX <span class="r">0000005A</span></div>
<div class="a t g" style="left:5px;top:16.6px;">ECX <span class="g">00000000</span></div>
<div class="a t g" style="left:5px;top:32.6px;">EDX <span class="g">00000001</span></div>
<div class="a t g" style="left:5px;top:48.6px;">EBX <span class="g">07D54F60</span></div>
<div class="a t g" style="left:5px;top:64.6px;">ESP <span class="r">0019F2F0</span></div>
<div class="a t g" style="left:5px;top:80.6px;">EBP <span class="g">00000000</span></div>
<div class="a t g" style="left:5px;top:96.6px;">ESI <span class="g">07BB2CC0</span></div>
<div class="a t g" style="left:5px;top:112.6px;">EDI <span class="g">00000001</span></div>
<div class="a t g" style="left:5px;top:136.6px;">EIP 12EEC0F3 mp.12EEC0F3</div>
<div class="a t g" style="left:5px;top:160.6px;">C 0  ES 002B 32</div>
<svg class="a" style="left:124px;top:160.4px;" width="19.6" height="19.6" fill="#808080" overflow="visible"><text class="cm" x="0" y="13.73" font-size="15.6">位</text></svg>
<div class="a t g" style="left:149px;top:160.6px;">0(FFFFFFFF)</div>
<div class="a t g" style="left:5px;top:176.6px;">P 1  CS 0023 32</div>
<svg class="a" style="left:124px;top:176.4px;" width="19.6" height="19.6" fill="#808080" overflow="visible"><text class="cm" x="0" y="13.73" font-size="15.6">位</text></svg>
<div class="a t g" style="left:149px;top:176.6px;">0(FFFFFFFF)</div>
<div class="a t g" style="left:5px;top:192.6px;">A 0  SS 002B 32</div>
<svg class="a" style="left:124px;top:192.4px;" width="19.6" height="19.6" fill="#808080" overflow="visible"><text class="cm" x="0" y="13.73" font-size="15.6">位</text></svg>
<div class="a t g" style="left:149px;top:192.6px;">0(FFFFFFFF)</div>
<div class="a t g" style="left:5px;top:208.6px;">Z 1  DS 002B 32</div>
<svg class="a" style="left:124px;top:208.4px;" width="19.6" height="19.6" fill="#808080" overflow="visible"><text class="cm" x="0" y="13.73" font-size="15.6">位</text></svg>
<div class="a t g" style="left:149px;top:208.6px;">0(FFFFFFFF)</div>
<div class="a t g" style="left:5px;top:224.6px;">S 0  FS 0053 32</div>
<svg class="a" style="left:124px;top:224.4px;" width="19.6" height="19.6" fill="#808080" overflow="visible"><text class="cm" x="0" y="13.73" font-size="15.6">位</text></svg>
<div class="a t g" style="left:149px;top:224.6px;">3DC000(FFF)</div>
<div class="a t g" style="left:5px;top:240.6px;">T 0  GS 002B 32</div>
<svg class="a" style="left:124px;top:240.4px;" width="19.6" height="19.6" fill="#808080" overflow="visible"><text class="cm" x="0" y="13.73" font-size="15.6">位</text></svg>
<div class="a t g" style="left:149px;top:240.6px;">0(FFFFFFFF)</div>
<div class="a t g" style="left:5px;top:256.6px;">D 0</div>
<div class="a t g" style="left:5px;top:272.6px;">O 0  LastErr <span class="r">ERROR_FILE_NOT_FOUND (00000002)</span></div>
</div>
<div class="a" style="left:233px;top:154px;width:270px;height:24px;background:transparent;box-sizing:border-box;border:3.2px solid #ff0000;filter:drop-shadow(2px 2px 1.7px rgba(0,0,0,.62));"></div>
<div class="a" style="left:21px;top:451px;width:183px;height:34.5px;background:transparent;box-sizing:border-box;border:3.2px solid #ff0000;filter:drop-shadow(2px 2px 1.7px rgba(0,0,0,.62));"></div>
<svg class="a" style="left:495px;top:145px;filter:drop-shadow(2px 2px 1.7px rgba(0,0,0,.62));" width="90" height="62" fill="#ff0000"><path d="M8.5 21.2L32.8 12Q29.6 15 30 18L74.3 12.9Q76.2 14.6 74.2 16.3L30 21Q30.6 23.6 33.8 25.9Z"/><path d="M7.2 41.2L34 38.2Q30.4 40.4 30.5 43L71.3 48.1Q73 49.6 71.2 51L30.5 46.3Q30.2 49 32.5 51.8Z"/></svg>
<svg class="a" style="left:573.6px;top:147.6px;stroke:#ff0000;stroke-width:.57;filter:drop-shadow(1.6px 1.6px 1.2px rgba(0,0,0,.45));" width="161.5" height="30" fill="#ff0000" overflow="visible"><text class="cf" x="0 26.25 52.5 78.75 105 131.25" y="22.88" font-size="26">关键代码位置</text></svg>
<svg class="a" style="left:573.6px;top:175.2px;stroke:#ff0000;stroke-width:.57;filter:drop-shadow(1.6px 1.6px 1.2px rgba(0,0,0,.45));" width="161.5" height="30" fill="#ff0000" overflow="visible"><text class="cf" x="0 26.25 52.5 78.75 105 131.25" y="22.88" font-size="26">阻塞代码位置</text></svg>
<svg class="a" style="left:211px;top:457.6px;stroke:#ff0000;stroke-width:.57;filter:drop-shadow(1.6px 1.6px 1.2px rgba(0,0,0,.45));" width="109" height="30" fill="#ff0000" overflow="visible"><text class="cf" x="0 26.25 52.5 78.75" y="22.88" font-size="26">断点位置</text></svg>
<div class="a" style="left:963px;top:725px;font-family:'Liberation Sans',sans-serif;font-size:19px;line-height:24px;color:#ececec;white-space:pre;transform-origin:0 0;text-shadow:1px 1px 0 #8a8a8a,0 0 1px #999;transform:scaleX(.885)">CSDN</div>
<div class="a" style="left:1019.4px;top:724.6px;font-family:'Liberation Sans',sans-serif;font-size:19px;line-height:24px;color:#ececec;white-space:pre;transform-origin:0 0;text-shadow:1px 1px 0 #8a8a8a,0 0 1px #999;transform:scaleX(.78)">@</div>
<svg class="a" style="left:1035.4px;top:726.4px;stroke:#ececec;stroke-width:.12;filter:drop-shadow(1px 1px 0 #8a8a8a) drop-shadow(0 0 .5px #999);" width="65.2" height="23.6" fill="#ececec" overflow="visible"><text class="cs" x="0 20.4 40.8" y="17.25" font-size="19.6">韩曙亮</text></svg></div>
</body></html>
